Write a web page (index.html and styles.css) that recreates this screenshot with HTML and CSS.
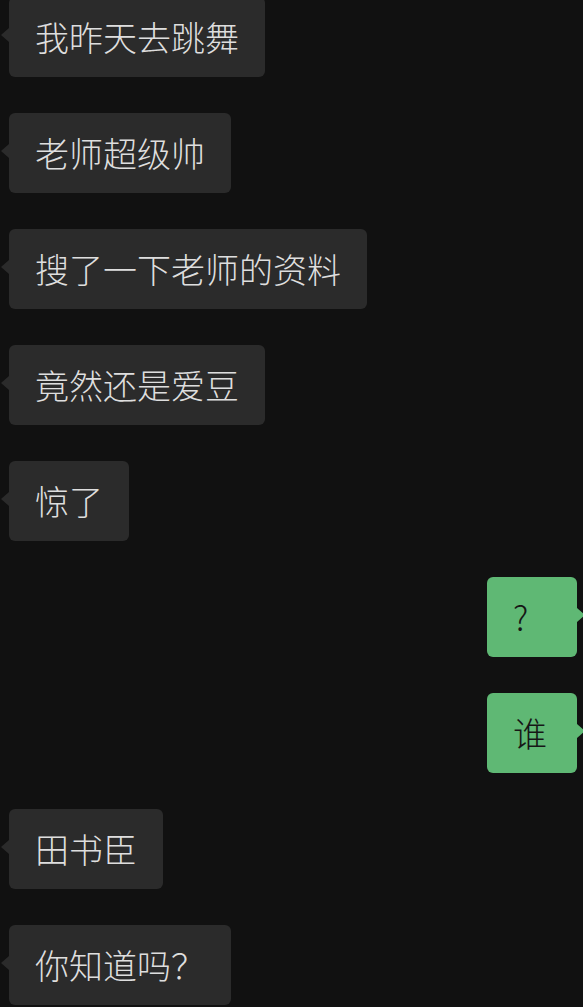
FILE: index.html
```html
<!DOCTYPE html>
<html lang="zh-CN">
<head>
    <meta charset="UTF-8">
    <meta name="viewport" content="width=device-width, initial-scale=1.0">
    <title>聊天记录</title>
    <link rel="stylesheet" href="styles.css">
</head>
<body>
    <div class="chat">
        <div class="row left"><div class="bubble">我昨天去跳舞</div></div>
        <div class="row left"><div class="bubble">老师超级帅</div></div>
        <div class="row left"><div class="bubble">搜了一下老师的资料</div></div>
        <div class="row left"><div class="bubble">竟然还是爱豆</div></div>
        <div class="row left"><div class="bubble">惊了</div></div>
        <div class="row right"><div class="bubble">?</div></div>
        <div class="row right"><div class="bubble">谁</div></div>
        <div class="row left"><div class="bubble">田书臣</div></div>
        <div class="row left"><div class="bubble">你知道吗？</div></div>
    </div>
</body>
</html>
```

FILE: styles.css
```css
body {
    margin: 0;
    background: #111111;
    font-family: "Noto Sans CJK SC", "Noto Sans", sans-serif;
    overflow: hidden;
}
.chat {
    display: flex;
    flex-direction: column;
    gap: 36px;
    margin-top: -3px;
}
.row {
    display: flex;
}
.row.left {
    justify-content: flex-start;
    padding-left: 9px;
}
.row.right {
    justify-content: flex-end;
    padding-right: 6px;
}
.bubble {
    position: relative;
    box-sizing: border-box;
    height: 80px;
    padding: 16px 26px;
    font-size: 34px;
    font-weight: 300;
    line-height: 48px;
    border-radius: 6px;
}
.left .bubble {
    background: #2b2b2b;
    color: #dedede;
}
.right .bubble {
    min-width: 90px;
    background: #5fb874;
    color: #161616;
}
/* 气泡小尖角 */
.bubble::before {
    content: "";
    position: absolute;
    top: 31px;
    width: 0;
    height: 0;
    border-top: 7px solid transparent;
    border-bottom: 7px solid transparent;
}
.left .bubble::before {
    left: -8px;
    border-right: 8px solid #2b2b2b;
}
.right .bubble::before {
    right: -8px;
    border-left: 8px solid #5fb874;
}
```
